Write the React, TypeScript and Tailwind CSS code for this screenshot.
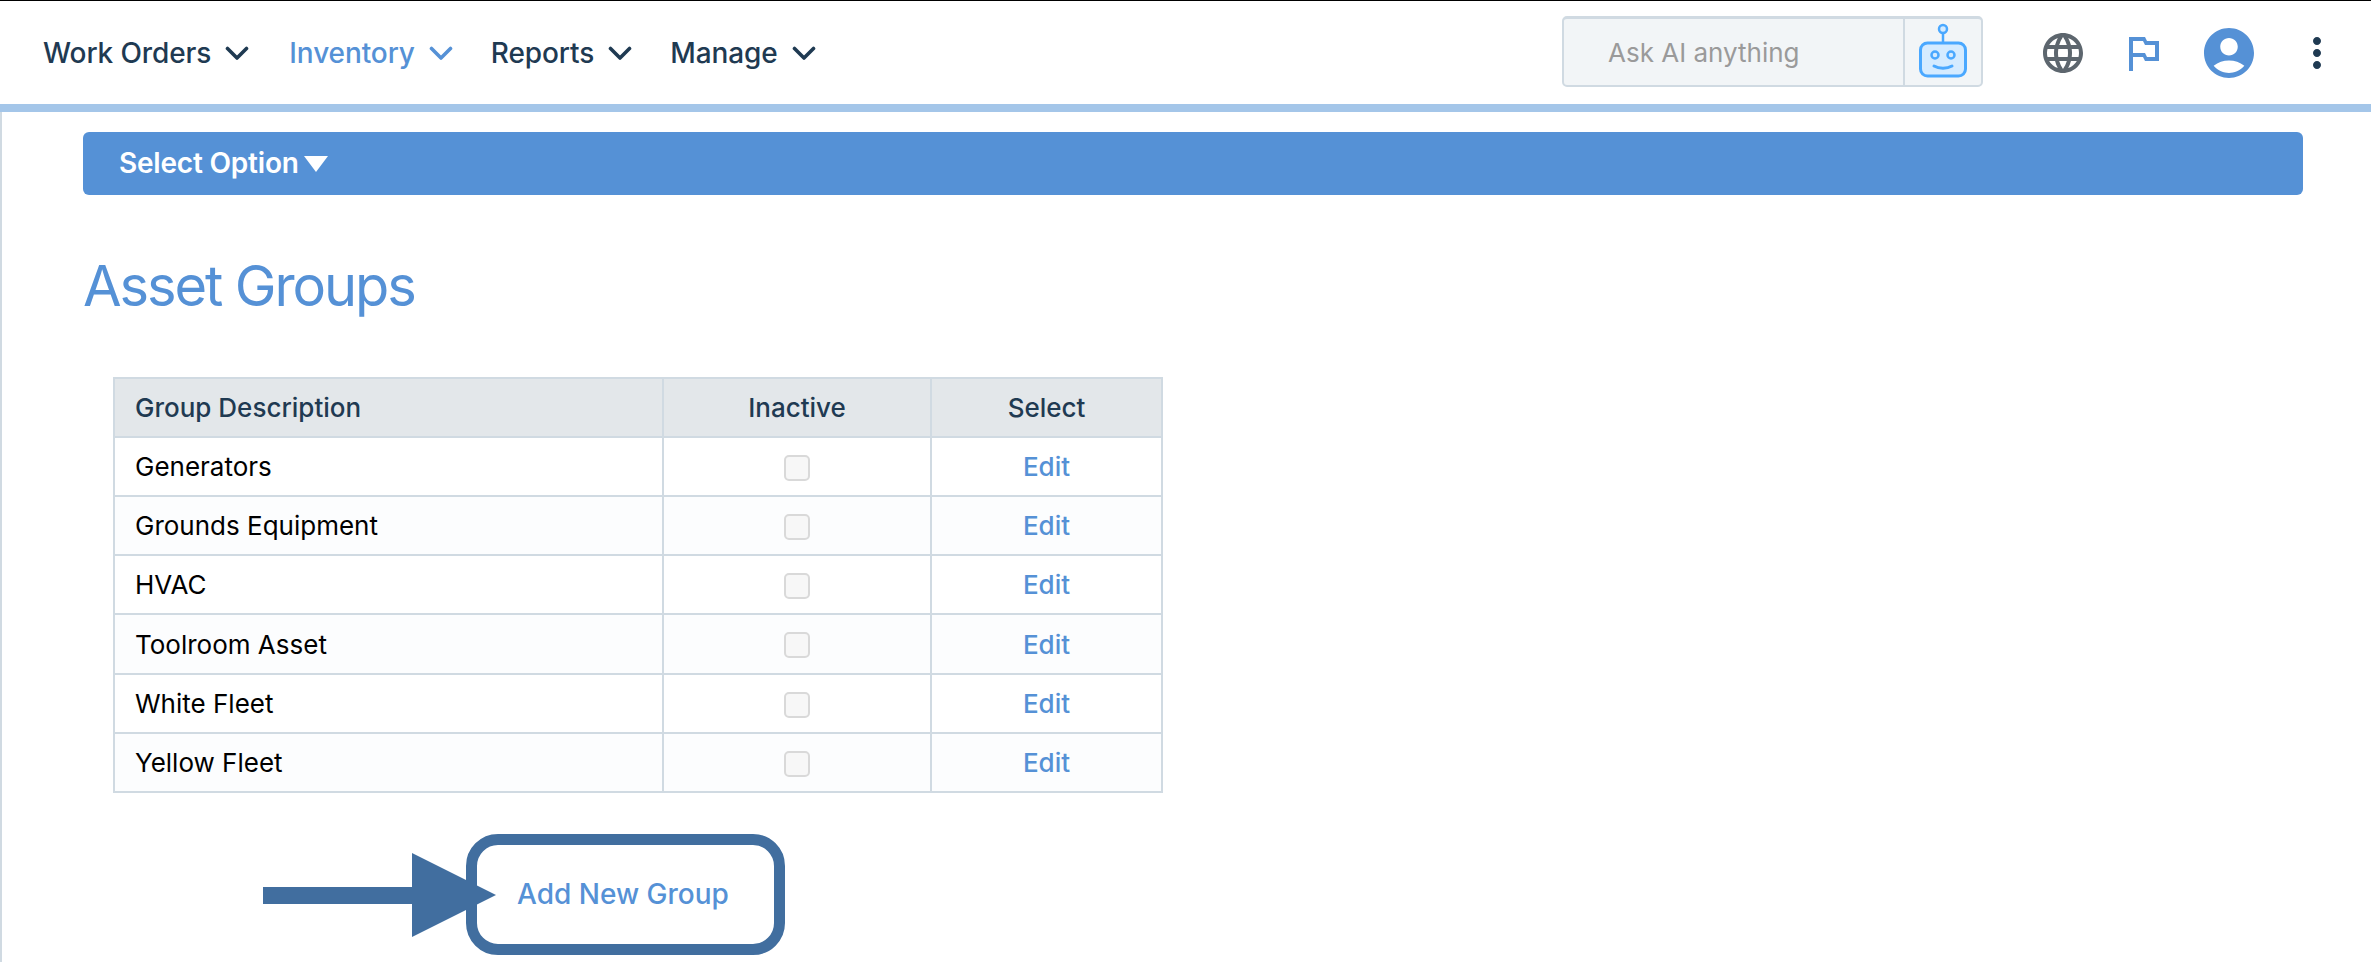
import React from 'react';
import { MdLanguage, MdOutlinedFlag, MdAccountCircle, MdMoreVert } from 'react-icons/md';

const groups = ['Generators', 'Grounds Equipment', 'HVAC', 'Toolroom Asset', 'White Fleet', 'Yellow Fleet'];

const Chevron = ({ className }: { className: string }) => (
  <svg width="24" height="15" viewBox="0 0 24 15" fill="none" className={className}>
    <path d="M2.5 2.5L12 12L21.5 2.5" stroke="currentColor" strokeWidth="3.6" strokeLinecap="round" strokeLinejoin="round" />
  </svg>
);

const NavItem = ({ label, active, className }: { label: string; active?: boolean; className: string }) => (
  <div className={`flex items-center gap-[14px] ${active ? 'text-[#5591d6]' : 'text-[#1f3a52]'} ${className}`}>
    <span className="text-[28px] font-medium leading-none tracking-[-0.1px]">{label}</span>
    <Chevron className="mt-[1px]" />
  </div>
);

const Robot = () => (
  <svg width="50" height="56" viewBox="0 0 50 56" fill="none">
    <circle cx="25" cy="6" r="4" fill="#d5ebff" stroke="#4aa8ff" strokeWidth="2.5" />
    <path d="M25 10V20" stroke="#4aa8ff" strokeWidth="2.5" />
    <rect x="2.5" y="20" width="45" height="33" rx="7" fill="#d5ebff" stroke="#4aa8ff" strokeWidth="3" />
    <circle cx="17" cy="32" r="3.5" fill="#d5ebff" stroke="#4aa8ff" strokeWidth="2.5" />
    <circle cx="33" cy="32" r="3.5" fill="#d5ebff" stroke="#4aa8ff" strokeWidth="2.5" />
    <path d="M16 43C21 46 29 46 34 43" stroke="#4aa8ff" strokeWidth="3" strokeLinecap="round" />
  </svg>
);

export default function App() {
  return (
    <div className="h-screen overflow-hidden bg-white font-[Inter,sans-serif]">
      {/* top bar */}
      <header className="flex h-[112px] items-center border-t border-b-[8px] border-t-black border-b-[#a4c6e9] pl-[43px] pr-[30px]">
        <NavItem label="Work Orders" className="mr-[40px]" />
        <NavItem label="Inventory" active className="mr-[38px]" />
        <NavItem label="Reports" className="mr-[38px]" />
        <NavItem label="Manage" />

        <div className="ml-auto mb-[2px] flex h-[71px] w-[421px] rounded-[5px] border-2 border-t-[3px] border-[#d0dae2] bg-[#f2f5f7]">
          <div className="flex flex-1 items-center pl-[44px] text-[26px] text-[#9a9a9a]">Ask AI anything</div>
          <div className="flex w-[78px] items-center justify-center border-l-2 border-[#d0dae2] pb-[3px]">
            <Robot />
          </div>
        </div>

        <div className="ml-[56px] flex items-center">
          <MdLanguage size={48} className="text-[#5d666e]" />
          <MdOutlinedFlag size={48} className="ml-[32px] text-[#5591d6]" />
          <MdAccountCircle size={60} className="ml-[32px] text-[#5591d6]" />
          <MdMoreVert size={48} className="ml-[34px] text-[#1f3a52]" />
        </div>
      </header>

      {/* page body */}
      <main className="h-full border-l-2 border-[#d0dae2] pl-[81px] pr-[68px] pt-[20px]">
        <div className="flex h-[63px] items-center rounded-[6px] bg-[#5591d6] pb-[2px] pl-[36px] text-[28px] font-semibold tracking-[-0.2px] text-white">
          Select Option
          <span className="ml-[5px] mt-[2px] h-0 w-0 border-x-[12px] border-t-[16px] border-x-transparent border-t-white" />
        </div>

        <h1 className="mt-[53px] text-[56px] font-normal leading-[76px] tracking-[-2.1px] text-[#5591d6]">Asset Groups</h1>

        <table className="ml-[30px] mt-[53px] w-[1050px] table-fixed border-collapse border-2 border-[#d0dae2] text-[26px]">
          <colgroup>
            <col className="w-[549px]" />
            <col className="w-[268px]" />
            <col />
          </colgroup>
          <thead>
            <tr className="h-[59px] bg-[#e3e7ea] text-[#1f3a52]">
              <th className="border-2 border-[#d0dae2] pl-[20px] text-left font-medium">Group Description</th>
              <th className="border-2 border-[#d0dae2] text-center font-medium">Inactive</th>
              <th className="border-2 border-[#d0dae2] text-center font-medium">Select</th>
            </tr>
          </thead>
          <tbody>
            {groups.map((g, i) => (
              <tr key={g} className={`${i === 3 ? 'h-[60px]' : 'h-[59px]'} ${i % 2 === 1 ? 'bg-[#fcfdfe]' : 'bg-white'}`}>
                <td className="border-2 border-[#d0dae2] pl-[20px] text-black">{g}</td>
                <td className="border-2 border-[#d0dae2]">
                  <div className="mx-auto mt-[2px] h-[26px] w-[26px] rounded-[5px] border-2 border-[#d9d9d9] bg-[#f7f7f7]" />
                </td>
                <td className="border-2 border-[#d0dae2] text-center font-medium text-[#5591d6]">Edit</td>
              </tr>
            ))}
          </tbody>
        </table>

        {/* callout round the add link */}
        <div className="relative ml-[383px] mt-[41px] flex h-[121px] w-[319px] items-center rounded-[32px] border-[11px] border-[#416e9f] pb-[2px] pl-[40px]">
          <span className="text-[28px] font-medium text-[#5591d6]">Add New Group</span>
          <svg width="233" height="84" viewBox="0 0 233 84" className="absolute left-[-214px] top-[8px]">
            <path d="M0 34H149V0L233 42L149 84V51H0Z" fill="#416e9f" />
          </svg>
        </div>
      </main>
    </div>
  );
}
